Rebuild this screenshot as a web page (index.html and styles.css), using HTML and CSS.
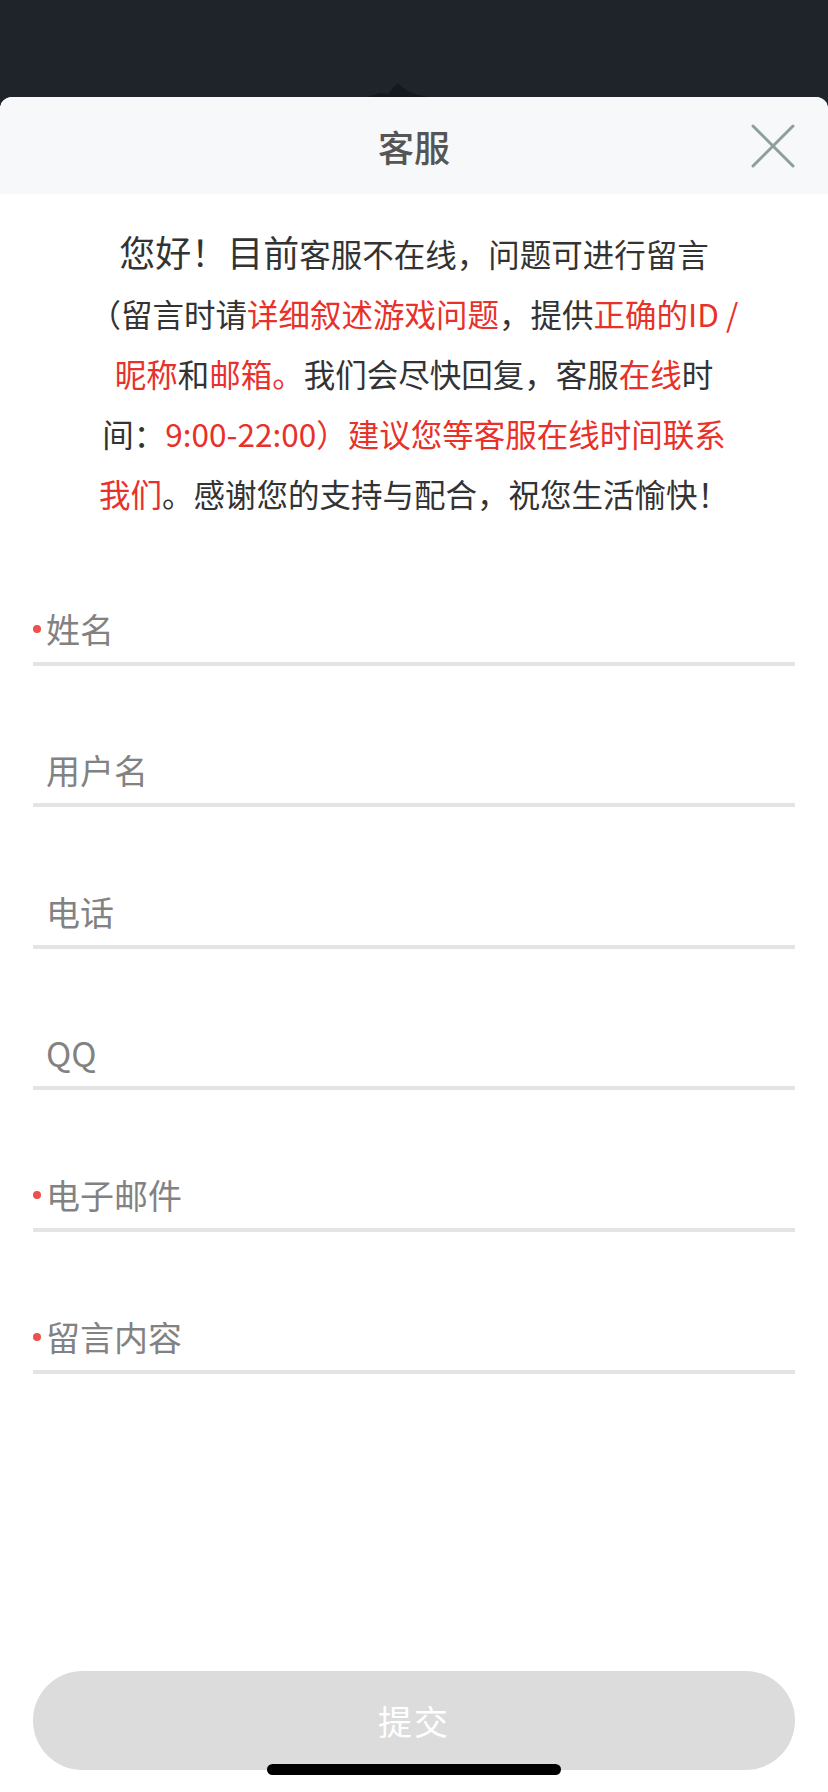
FILE: index.html
```html
<!DOCTYPE html>
<html lang="zh-CN">
<head>
  <meta charset="UTF-8" />
  <title>客服</title>
  <link rel="stylesheet" href="styles.css">
</head>
<body>

  <div class="backdrop">
    <svg class="backdrop-shape" width="60" height="14" viewBox="0 0 60 14">
      <path d="M0 14 L12 10 L20 11 L26 4 L30 0 L35 5 L42 9 L50 12 L60 14 Z" fill="#15181c" />
    </svg>
  </div>

  <div class="sheet">
    <div class="sheet-header">
      <h1>客服</h1>
      <button class="close-btn" aria-label="关闭">
        <svg width="44" height="44" viewBox="0 0 44 44">
          <line x1="2" y1="2" x2="42" y2="42" />
          <line x1="42" y1="2" x2="2" y2="42" />
        </svg>
      </button>
    </div>

    <p class="notice">
      <span class="lead">您好！目前</span>客服不在线，问题可进行留言<br>
      （留言时请<span class="hl">详细叙述游戏问题</span>，提供<span class="hl">正确的ID /<br>
      昵称</span>和<span class="hl">邮箱。</span>我们会尽快回复，客服<span class="hl">在线</span>时<br>
      间：<span class="hl">9:00-22:00）建议您等客服在线时间联系<br>
      我们</span>。感谢您的支持与配合，祝您生活愉快！
    </p>

    <form class="form" id="msgForm">
      <label class="field">
        <span class="field-label"><i class="mark"></i>姓名</span>
      </label>
      <label class="field">
        <span class="field-label"><i class="mark off"></i>用户名</span>
      </label>
      <label class="field">
        <span class="field-label"><i class="mark off"></i>电话</span>
      </label>
      <label class="field">
        <span class="field-label"><i class="mark off"></i>QQ</span>
      </label>
      <label class="field">
        <span class="field-label"><i class="mark"></i>电子邮件</span>
      </label>
      <label class="field">
        <span class="field-label"><i class="mark"></i>留言内容</span>
      </label>
    </form>

    <button class="submit-btn" type="submit" form="msgForm" disabled>提交</button>
  </div>

  <div class="home-indicator"></div>

</body>
</html>
```

FILE: styles.css
```css
* {
  box-sizing: border-box;
}

body {
  margin: 0;
  padding: 0;
  background: linear-gradient(180deg, #1f232a, #252932);
  font-family: "Noto Sans CJK SC", "Noto Sans", sans-serif;
  min-height: 1792px;
}

.backdrop {
  height: 97px;
  position: relative;
}

.backdrop-shape {
  position: absolute;
  left: 368px;
  bottom: 0;
}

.sheet {
  background: white;
  border-radius: 12px 12px 0 0;
  height: 1695px;
  display: flex;
  flex-direction: column;
  overflow: hidden;
}

.sheet-header {
  height: 97px;
  background: #f7f8fa;
  display: flex;
  align-items: center;
  justify-content: center;
  position: relative;
}

.sheet-header h1 {
  margin: 0;
  font-size: 36px;
  font-weight: 500;
  color: #555;
  line-height: 1;
}

.close-btn {
  position: absolute;
  right: 33px;
  top: 27px;
  width: 44px;
  height: 44px;
  padding: 0;
  border: none;
  background: none;
  cursor: pointer;
}

.close-btn svg {
  display: block;
  stroke: #8c9f9b;
  stroke-width: 3;
  stroke-linecap: round;
}

.notice {
  margin: 0 auto;
  width: 740px;
  padding: 29px 0 1px;
  text-align: center;
  font-size: 31.5px;
  line-height: 60px;
  color: #333;
}

.notice .lead {
  font-size: 36px;
  line-height: 1;
}

.notice .hl {
  color: #e8312a;
}

.form {
  padding: 0 33px;
  display: flex;
  flex-direction: column;
}

.field {
  height: 141.6px;
  display: flex;
  flex-direction: column;
  justify-content: flex-end;
  padding-bottom: 13px;
  border-bottom: 4px solid #e4e4e7;
}

.field-label {
  display: flex;
  align-items: center;
  gap: 5px;
  font-size: 34px;
  line-height: 40px;
  color: #828282;
}

.mark {
  width: 8px;
  height: 8px;
  border-radius: 50%;
  background: #f0504c;
}

.mark.off {
  visibility: hidden;
}

.submit-btn {
  margin: auto 33px 22px;
  height: 99px;
  border: none;
  border-radius: 50px;
  background: #dcdcdc;
  color: white;
  font-family: inherit;
  font-size: 34px;
  letter-spacing: 2px;
}

.home-indicator {
  position: absolute;
  left: 267px;
  top: 1764px;
  width: 294px;
  height: 11px;
  border-radius: 6px;
  background: #000;
}
```
